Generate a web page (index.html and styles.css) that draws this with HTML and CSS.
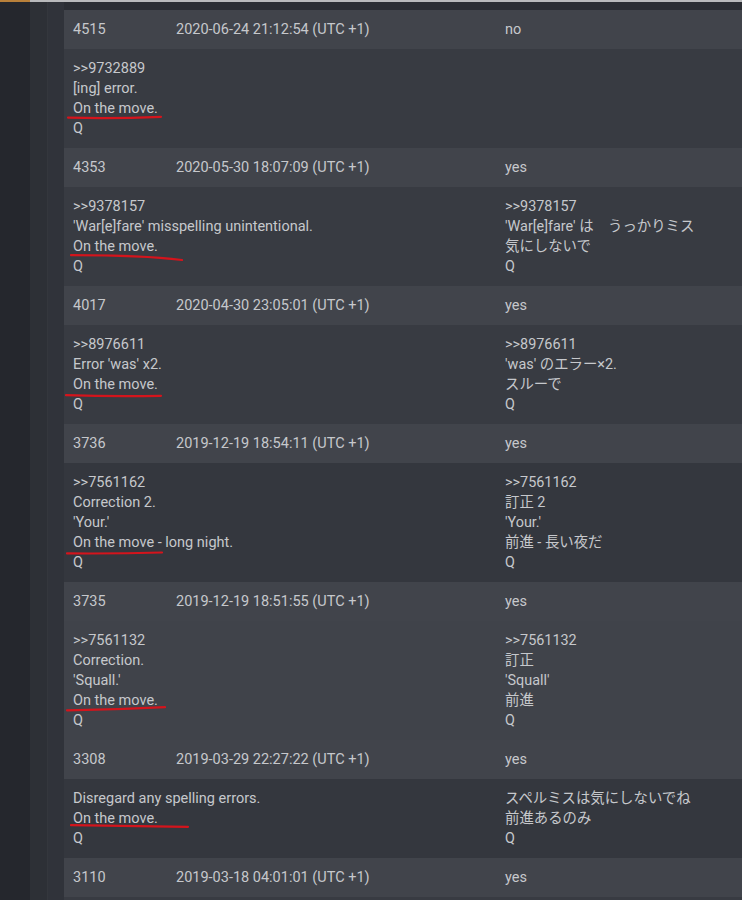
FILE: index.html
```html
<!DOCTYPE html>
<html lang="en">
<head>
<meta charset="utf-8">
<title>Drops</title>
<link rel="stylesheet" href="styles.css">
</head>
<body>
<div class="topline"><span class="topline-accent"></span></div>
<div class="layout">
  <div class="rail"></div>
  <div class="gutter"></div>
  <div class="panel">
    <div class="table">
      <div class="row head"><div class="cell">4515</div><div class="cell">2020-06-24 21:12:54 (UTC +1)</div><div class="cell">no</div></div>
      <div class="row body">
        <div class="cell en">&gt;&gt;9732889<br>[ing] error.<br><span class="mark">On the move.<svg class="ul" width="130" height="14" viewBox="0 0 130 14"><path d="M1 5.6 Q 45 6.8 94 4.8"/></svg></span><br>Q</div>
        <div class="cell jp"></div>
      </div>

      <div class="row head"><div class="cell">4353</div><div class="cell">2020-05-30 18:07:09 (UTC +1)</div><div class="cell">yes</div></div>
      <div class="row body">
        <div class="cell en">&gt;&gt;9378157<br>'War[e]fare' misspelling unintentional.<br><span class="mark">On the move.<svg class="ul" width="130" height="14" viewBox="0 0 130 14"><path d="M4 5.2 Q 75 5.2 115 10"/></svg></span><br>Q</div>
        <div class="cell jp">&gt;&gt;9378157<br>'War[e]fare' は　うっかりミス<br>気にしないで<br>Q</div>
      </div>

      <div class="row head"><div class="cell">4017</div><div class="cell">2020-04-30 23:05:01 (UTC +1)</div><div class="cell">yes</div></div>
      <div class="row body">
        <div class="cell en">&gt;&gt;8976611<br>Error 'was' x2.<br><span class="mark">On the move.<svg class="ul" width="130" height="14" viewBox="0 0 130 14"><path d="M-1 7.2 Q 45 8.6 94 7.8"/></svg></span><br>Q</div>
        <div class="cell jp">&gt;&gt;8976611<br>'was' のエラー×2.<br>スルーで<br>Q</div>
      </div>

      <div class="row head"><div class="cell">3736</div><div class="cell">2019-12-19 18:54:11 (UTC +1)</div><div class="cell">yes</div></div>
      <div class="row body dark">
        <div class="cell en">&gt;&gt;7561162<br>Correction 2.<br>'Your.'<br><span class="mark">On the move<svg class="ul" width="130" height="14" viewBox="0 0 130 14"><path d="M0 7.4 Q 50 7.8 95 6.5"/></svg></span> - long night.<br>Q</div>
        <div class="cell jp">&gt;&gt;7561162<br>訂正 2<br>'Your.'<br>前進 - 長い夜だ<br>Q</div>
      </div>

      <div class="row head"><div class="cell">3735</div><div class="cell">2019-12-19 18:51:55 (UTC +1)</div><div class="cell">yes</div></div>
      <div class="row body light">
        <div class="cell en">&gt;&gt;7561132<br>Correction.<br>'Squall.'<br><span class="mark">On the move.<svg class="ul" width="130" height="14" viewBox="0 0 130 14"><path d="M0 6.3 Q 50 5.8 98 3.2"/></svg></span><br>Q</div>
        <div class="cell jp">&gt;&gt;7561132<br>訂正<br>'Squall'<br>前進<br>Q</div>
      </div>

      <div class="row head"><div class="cell">3308</div><div class="cell">2019-03-29 22:27:22 (UTC +1)</div><div class="cell">yes</div></div>
      <div class="row body dark">
        <div class="cell en">Disregard any spelling errors.<br><span class="mark">On the move.<svg class="ul" width="130" height="14" viewBox="0 0 130 14"><path d="M4 3.2 Q 60 4 121 4.8"/></svg></span><br>Q</div>
        <div class="cell jp">スペルミスは気にしないでね<br>前進あるのみ<br>Q</div>
      </div>

      <div class="row head"><div class="cell">3110</div><div class="cell">2019-03-18 04:01:01 (UTC +1)</div><div class="cell">yes</div></div>
      <div class="row body">
        <div class="cell en">&nbsp;</div>
        <div class="cell jp">&nbsp;</div>
      </div>
    </div>
  </div>
</div>
</body>
</html>
```
FILE: styles.css
```css
html, body {
  margin: 0;
  padding: 0;
  background: #2f3238;
  height: 100%;
  overflow: hidden;
}
body {
  font-family: Roboto, "Noto Sans CJK JP", sans-serif;
  font-size: 14.5px;
  line-height: 20px;
  color: #c6c8cc;
}
.topline {
  height: 2px;
  background: #b9babc;
  display: flex;
}
.topline-accent {
  width: 30px;
  background: #b9803a;
}
.layout {
  display: flex;
  min-height: 898px;
}
.rail {
  width: 30px;
  flex: none;
  background: #25272d;
}
.gutter {
  width: 18px;
  flex: none;
  background: #2d3036;
  border-right: 1px solid #34373d;
  box-sizing: border-box;
}
.panel {
  flex: 1;
  min-width: 0;
  background: #30333a;
  padding-left: 16px;
  overflow: hidden;
}
.table {
  border-top: 8px solid #2b2e34;
}
.row {
  display: grid;
  grid-template-columns: 103px 329px 1fr;
}
.cell {
  padding: 9.5px 9px;
  white-space: nowrap;
}
.head {
  background: #41444b;
}
.body {
  background: #383b42;
}
.body.dark {
  background: #34373e;
}
.body.light {
  background: #40434a;
}
.en {
  grid-column: 1 / 3;
}
.jp {
  font-size: 14.4px;
}
.mark {
  position: relative;
}
.ul {
  position: absolute;
  left: -6px;
  top: 12px;
  overflow: visible;
  pointer-events: none;
}
.ul path {
  fill: none;
  stroke: #d4141c;
  stroke-width: 2.2;
  stroke-linecap: round;
}
```
